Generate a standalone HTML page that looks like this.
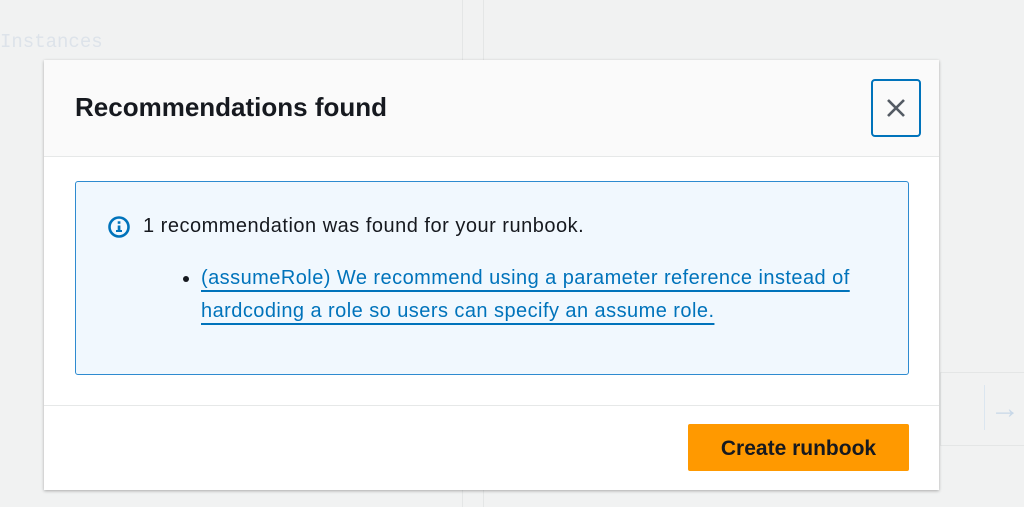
<!DOCTYPE html>
<html><head><style>
body{margin:0;width:1024px;height:507px;background:#f1f2f2;font-family:"Liberation Sans",sans-serif;position:relative;overflow:hidden}
.bgtxt{position:absolute;left:0;top:31px;font-family:"Liberation Mono",monospace;font-size:19px;color:#dde3ea}
.vl{position:absolute;top:0;width:1px;height:507px;background:#e4e6e6}
.modal{position:absolute;left:44px;top:60px;width:895px;height:430px;background:#fff;box-shadow:0 1px 3px rgba(0,0,0,.3)}
.hdr{height:96px;background:#fafafa;border-bottom:1px solid #e6e8e8;position:relative}
.hdr h1{margin:0;position:absolute;left:31px;top:32px;font-size:26px;font-weight:bold;color:#16191f}
.close{position:absolute;left:827px;top:19px;width:50px;height:58px;border:2px solid #0073bb;border-radius:4px;box-sizing:border-box}
.alert{position:absolute;left:31px;top:121px;width:834px;height:194px;border:1px solid #2e8bd0;background:#f1f8fe;box-sizing:border-box;border-radius:3px}
.alert .t{position:absolute;left:67px;top:33px;font-size:20px;letter-spacing:0.5px;color:#16191f}
.ic{position:absolute;left:31px;top:33px}
.alert ul{position:absolute;left:107px;top:80px;width:680px;margin:0;padding:0 0 0 18px;font-size:20px;letter-spacing:0.45px;line-height:33px;color:#16191f}
.alert a{color:#0073bb;text-decoration:underline;text-underline-offset:6px}
.ftr{position:absolute;left:0;top:345px;width:100%;border-top:1px solid #e6e8e8}
.btn{position:absolute;left:644px;top:364px;width:221px;height:47px;background:#ff9900;border-radius:2px;font-weight:bold;font-size:21px;color:#16191f;text-align:center;line-height:49px}
</style></head><body>
<div class="bgtxt">Instances</div>
<div class="vl" style="left:462px"></div><div class="vl" style="left:483px"></div>
<div style="position:absolute;left:940px;top:372px;width:84px;height:72px;border:1px solid #e4e6e6;border-right:none"></div>
<div style="position:absolute;left:984px;top:385px;width:1px;height:45px;background:#dbe6f0"></div>
<div style="position:absolute;left:990px;top:392px;color:#c8d8e8;font-size:30px">→</div>
<div class="modal">
<div class="hdr"><h1>Recommendations found</h1>
<div class="close"><svg width="46" height="54" viewBox="0 0 46 54"><path d="M15 19L31 35M31 19L15 35" stroke="#545b64" stroke-width="2.6"/></svg></div></div>
<div class="alert">
<svg class="ic" width="24" height="24" viewBox="0 0 24 24"><circle cx="12" cy="12" r="9.5" fill="none" stroke="#0073bb" stroke-width="2.6"/><rect x="10.7" y="10.5" width="2.7" height="6.5" fill="#0073bb"/><rect x="10.7" y="6.3" width="2.7" height="2.5" fill="#0073bb"/><rect x="9" y="15" width="6" height="2" fill="#0073bb"/></svg>
<div class="t">1 recommendation was found for your runbook.</div>
<ul><li><a>(assumeRole) We recommend using a parameter reference instead of hardcoding a role so users can specify an assume role.</a></li></ul>
</div>
<div class="ftr"></div>
<div class="btn">Create runbook</div>
</div>
</body></html>
